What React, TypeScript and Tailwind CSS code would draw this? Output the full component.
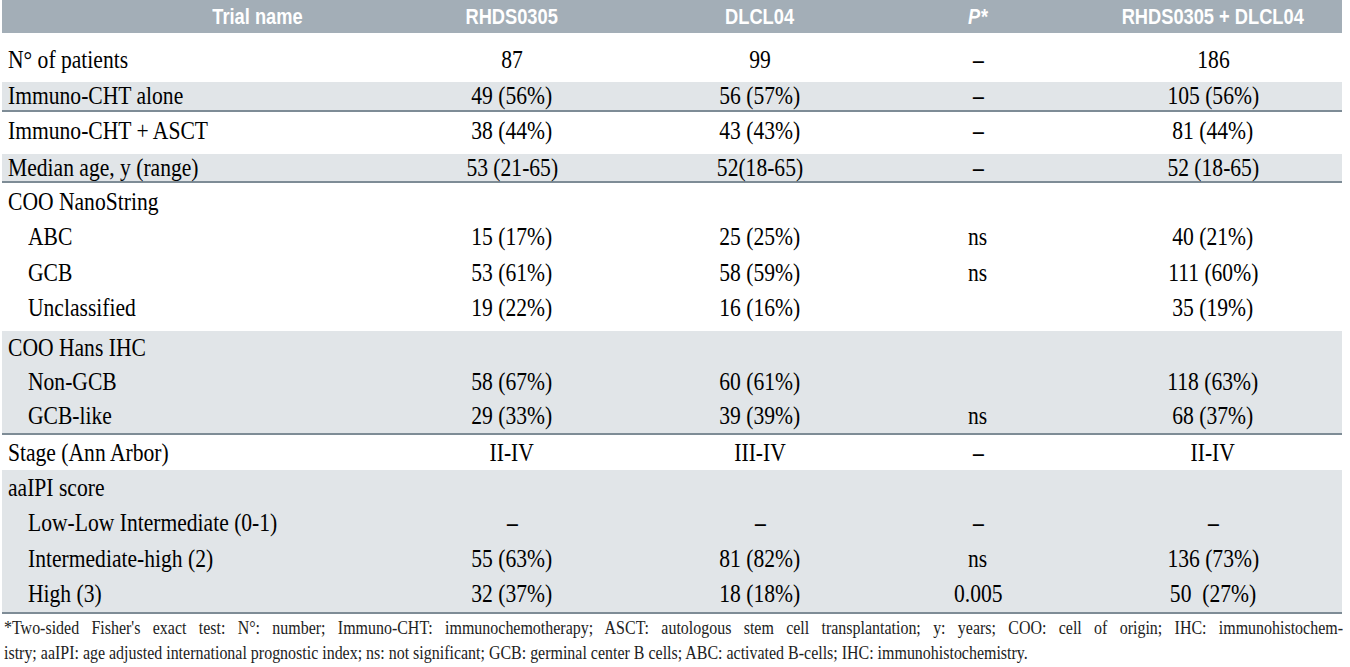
import React from "react"

type Row = {
  label: string
  sub?: boolean
  cells: string[]
}

const serif = "font-['Liberation_Serif',_'Times_New_Roman',_serif]"
const cols = "grid grid-cols-[374px_272px_224px_212px_258px]"

// the source typeface is a condensed serif: larger size squeezed horizontally
function Cond({ children, left }: { children: React.ReactNode; left?: boolean }) {
  return (
    <span className={`inline-block whitespace-pre scale-x-[0.83] ${left ? "origin-left" : "origin-center"}`}>
      {children}
    </span>
  )
}

function DataRow({ row, h }: { row: Row; h: string }) {
  return (
    <div className={`${cols} ${h} items-center text-[26px] leading-none text-black`}>
      <div className={row.sub ? "pl-[26px]" : "pl-[6px]"}>
        <Cond left>{row.label}</Cond>
      </div>
      {row.cells.map((c, i) => (
        <div key={i} className={`text-center ${c === "–" ? "font-bold" : ""}`}>
          <Cond>{c}</Cond>
        </div>
      ))}
    </div>
  )
}

export default function App() {
  // table content, grouped by shaded band
  const nanoString: Row[] = [
    { label: "COO NanoString", cells: ["", "", "", ""] },
    { label: "ABC", sub: true, cells: ["15 (17%)", "25 (25%)", "ns", "40 (21%)"] },
    { label: "GCB", sub: true, cells: ["53 (61%)", "58 (59%)", "ns", "111 (60%)"] },
    { label: "Unclassified", sub: true, cells: ["19 (22%)", "16 (16%)", "", "35 (19%)"] },
  ]
  const hans: Row[] = [
    { label: "COO Hans IHC", cells: ["", "", "", ""] },
    { label: "Non-GCB", sub: true, cells: ["58 (67%)", "60 (61%)", "", "118 (63%)"] },
    { label: "GCB-like", sub: true, cells: ["29 (33%)", "39 (39%)", "ns", "68 (37%)"] },
  ]
  const aaipi: Row[] = [
    { label: "aaIPI score", cells: ["", "", "", ""] },
    { label: "Low-Low Intermediate (0-1)", sub: true, cells: ["–", "–", "–", "–"] },
    { label: "Intermediate-high (2)", sub: true, cells: ["55 (63%)", "81 (82%)", "ns", "136 (73%)"] },
    { label: "High (3)", sub: true, cells: ["32 (37%)", "18 (18%)", "0.005", "50  (27%)"] },
  ]

  return (
    <div className={`w-[1350px] h-[667px] overflow-hidden bg-white pl-[2px] ${serif}`}>
      <div className="w-[1340px]">
        {/* Header */}
        <div
          className={`${cols} h-[33px] items-center bg-[#a3aeb7] text-white font-bold text-[22px] leading-none font-['Liberation_Sans',_Arial,_sans-serif]`}
        >
          <div className="pl-[136px] text-center">
            <Cond>Trial name</Cond>
          </div>
          <div className="text-center">
            <Cond>RHDS0305</Cond>
          </div>
          <div className="text-center">
            <Cond>DLCL04</Cond>
          </div>
          <div className="text-center italic">
            <Cond>P*</Cond>
          </div>
          <div className="text-center">
            <Cond>RHDS0305 + DLCL04</Cond>
          </div>
        </div>

        <div className="pt-[5px]">
          <DataRow h="h-[44px]" row={{ label: "N° of patients", cells: ["87", "99", "–", "186"] }} />
        </div>
        <div className="bg-[#e1e5e8] border-b-2 border-[#7e8c96]">
          <DataRow h="h-[28px]" row={{ label: "Immuno-CHT alone", cells: ["49 (56%)", "56 (57%)", "–", "105 (56%)"] }} />
        </div>
        <div className="pb-[4px]">
          <DataRow h="h-[38px]" row={{ label: "Immuno-CHT + ASCT", cells: ["38 (44%)", "43 (43%)", "–", "81 (44%)"] }} />
        </div>
        <div className="bg-[#e1e5e8] border-b-2 border-[#7e8c96]">
          <DataRow
            h="h-[27px]"
            row={{ label: "Median age, y (range)", cells: ["53 (21-65)", "52(18-65)", "–", "52 (18-65)"] }}
          />
        </div>

        {/* COO NanoString */}
        <div className="pt-[1px] pb-[5px]">
          {nanoString.map((r) => (
            <DataRow key={r.label} h="h-[35.5px]" row={r} />
          ))}
        </div>

        {/* COO Hans IHC */}
        <div className="bg-[#e1e5e8] border-b-2 border-[#7e8c96]">
          {hans.map((r) => (
            <DataRow key={r.label} h="h-[34px]" row={r} />
          ))}
        </div>

        <DataRow h="h-[35px]" row={{ label: "Stage (Ann Arbor)", cells: ["II-IV", "III-IV", "–", "II-IV"] }} />

        {/* aaIPI */}
        <div className="bg-[#e1e5e8] border-b-2 border-[#7e8c96]">
          {aaipi.map((r) => (
            <DataRow key={r.label} h="h-[35.5px]" row={r} />
          ))}
        </div>
      </div>

      {/* Footnote */}
      <div className="w-[1341px] overflow-hidden pl-[2px] pt-[1px] text-[19px] leading-[25px] text-[#222]">
        <div className="w-[1594px] origin-left scale-x-[0.84]">
          <div className="text-justify [text-align-last:justify]">
            *Two-sided Fisher's exact test: N°: number; Immuno-CHT: immunochemotherapy; ASCT: autologous stem cell
            transplantation; y: years; COO: cell of origin; IHC: immunohistochem-
          </div>
          <div>
            istry; aaIPI: age adjusted international prognostic index; ns: not significant; GCB: germinal center B cells;
            ABC: activated B-cells; IHC: immunohistochemistry.
          </div>
        </div>
      </div>
    </div>
  )
}
